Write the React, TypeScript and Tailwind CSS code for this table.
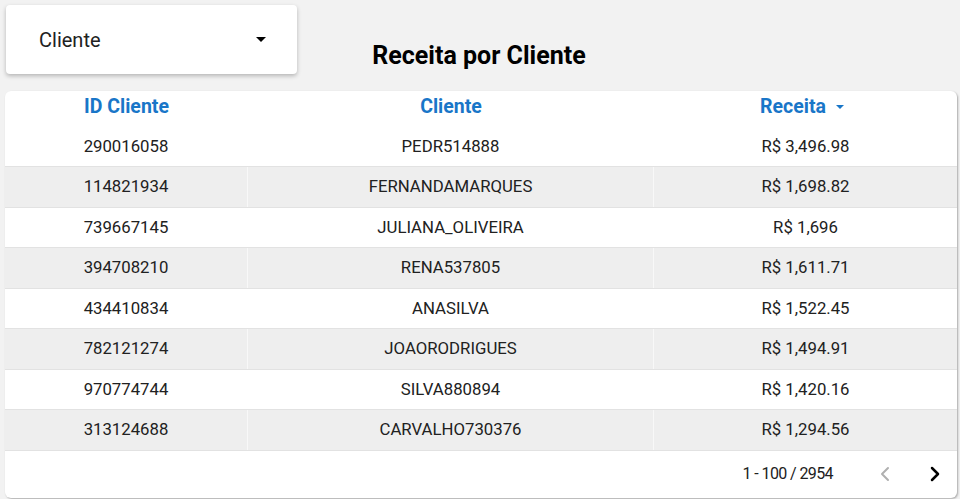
import { ChevronLeft, ChevronRight } from "lucide-react";

const rows = [
  { id: "290016058", cliente: "PEDR514888", receita: "R$ 3,496.98" },
  { id: "114821934", cliente: "FERNANDAMARQUES", receita: "R$ 1,698.82" },
  { id: "739667145", cliente: "JULIANA_OLIVEIRA", receita: "R$ 1,696" },
  { id: "394708210", cliente: "RENA537805", receita: "R$ 1,611.71" },
  { id: "434410834", cliente: "ANASILVA", receita: "R$ 1,522.45" },
  { id: "782121274", cliente: "JOAORODRIGUES", receita: "R$ 1,494.91" },
  { id: "970774744", cliente: "SILVA880894", receita: "R$ 1,420.16" },
  { id: "313124688", cliente: "CARVALHO730376", receita: "R$ 1,294.56" },
];

export default function App() {
  return (
    <div
      className="w-[960px] h-[499px] bg-[#f2f2f2] overflow-hidden text-[#212121]"
      style={{ fontFamily: "Roboto, 'Liberation Sans', sans-serif" }}
    >
      {/* Top bar */}
      <div className="grid grid-cols-[1fr_auto_1fr] items-center pt-[5px] pl-[6px]">
        <div>
          <div className="w-[291px] h-[69px] bg-white rounded-[4px] shadow-[0_2px_4px_rgba(0,0,0,0.25)] flex items-center justify-between pl-[33px] pr-[31px]">
            <span className="text-[20px]">Cliente</span>
            <span className="w-0 h-0 border-l-[5px] border-r-[5px] border-t-[5px] border-l-transparent border-r-transparent border-t-black" />
          </div>
        </div>
        <h1 className="text-[25px] font-bold text-black pt-[32px] pr-[8px]">Receita por Cliente</h1>
        <div />
      </div>

      {/* Table */}
      <div className="ml-[5px] mt-[16px] w-[952px] h-[407px] bg-white rounded-[6px] shadow-[1px_1px_2px_rgba(0,0,0,0.3)] flex flex-col overflow-hidden">
        <div className="grid grid-cols-[243px_406px_1fr] h-[36px] items-center pb-[4px] text-[19.5px] font-bold text-[#1976c8]">
          <div className="text-center">ID Cliente</div>
          <div className="text-center">Cliente</div>
          <div className="flex items-center justify-center gap-[10px] pr-[7px]">
            <span>Receita</span>
            <span className="w-0 h-0 border-l-[4px] border-r-[4px] border-t-[4px] border-l-transparent border-r-transparent border-t-[#1976c8]" />
          </div>
        </div>
        {rows.map((r, i) => (
          <div
            key={r.id}
            className={
              "grid grid-cols-[243px_406px_1fr] h-[40.5px] items-center text-[16.75px] border-b border-[#e2e2e2] " +
              (i % 2 === 1 ? "bg-[#eeeeee]" : "bg-white")
            }
          >
            <div className="text-center h-full flex items-center justify-center border-r border-white/60">{r.id}</div>
            <div className="text-center h-full flex items-center justify-center border-r border-white/60">{r.cliente}</div>
            <div className="text-center">{r.receita}</div>
          </div>
        ))}
        <div className="flex-1 flex items-center justify-end pr-[10px] text-[16px] tracking-[-0.6px]">
          <span className="mr-[40px]">1 - 100 / 2954</span>
          <ChevronLeft className="w-[24px] h-[24px] text-[#b0b0b0] mr-[26px]" strokeWidth={2} />
          <ChevronRight className="w-[24px] h-[24px] text-black" strokeWidth={2.5} />
        </div>
      </div>
    </div>
  );
}
